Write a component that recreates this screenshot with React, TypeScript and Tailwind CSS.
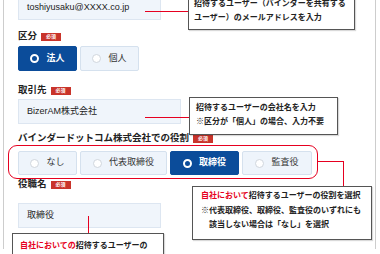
import React from "react";

const jp = "font-['Liberation_Sans','Noto_Sans_CJK_JP',sans-serif]";

const Badge = () => (
  <span className="ml-[4px] inline-flex h-[8px] w-[20px] items-center justify-center bg-[#c9342b] text-[5px] leading-none text-white">
    必須
  </span>
);

const Label = ({ text, className }: { text: string; className?: string }) => (
  <div className={`flex h-[13px] items-center text-[9.5px] font-bold text-[#222] ${className ?? ""}`}>
    {text}
    <Badge />
  </div>
);

const Option = ({ text, selected, width }: { text: string; selected?: boolean; width: string }) => (
  <div
    className={`flex h-full items-center justify-center gap-[7px] rounded-[2px] border text-[9px] ${width} ${
      selected ? "border-[#0b4c9a] bg-[#0b4c9a] font-bold text-white" : "border-[#d5e1ee] bg-[#eef4fb] text-[#333]"
    }`}
  >
    {selected ? (
      <span className="h-[9px] w-[9px] rounded-full border-[2.5px] border-white bg-[#0b4c9a]" />
    ) : (
      <span className="h-[9px] w-[9px] rounded-full border border-[#d0d6dd] bg-white" />
    )}
    {text}
  </div>
);

const Input = ({ value, width, className }: { value: string; width: string; className?: string }) => (
  <div
    className={`flex h-[25px] items-center border border-[#dde6f1] bg-[#f0f5fb] pl-[8px] text-[9px] text-[#222] ${width} ${className ?? ""}`}
  >
    {value}
  </div>
);

const Callout = ({ className, children }: { className: string; children: React.ReactNode }) => (
  <div className={`absolute border border-[#555] bg-white text-[8px] font-bold leading-[13.5px] text-[#222] shadow-[1px_1px_1px_rgba(0,0,0,0.15)] ${className}`}>
    {children}
  </div>
);

export default function App() {
  return (
    <div className={`relative h-[254px] w-[380px] overflow-hidden bg-white ${jp}`}>
      <div className="ml-[3px] h-full w-[373px] border-l border-r border-[#cdcdcd] pl-[14px]">
        <Input value="toshiyusaku@XXXX.co.jp" width="w-[143px]" className="-mt-[5px]" />

        <Label text="区分" className="mt-[10px]" />
        <div className="mt-[3px] flex h-[25px] gap-[3px]">
          <Option text="法人" selected width="w-[59px]" />
          <Option text="個人" width="w-[59px]" />
        </div>

        <Label text="取引先" className="mt-[13px]" />
        <Input value="BizerAM株式会社" width="w-[163px]" className="mt-[2px]" />

        <Label text="バインダードットコム株式会社での役割" className="mt-[8px]" />
        <div className="mt-[6px] flex h-[24px] gap-[3px]">
          <Option text="なし" width="w-[59px]" />
          <Option text="代表取締役" width="w-[87px]" />
          <Option text="取締役" selected width="w-[69px]" />
          <Option text="監査役" width="w-[70px]" />
        </div>

        <Label text="役職名" className="mt-[3px]" />
        <Input value="取締役" width="w-[143px]" className="mt-[12px]" />
      </div>

      {/* red highlight around role options */}
      <div className="absolute left-[8px] top-[145px] h-[34px] w-[310px] rounded-[9px] border-[1.5px] border-[#e60020]" />

      {/* connector lines */}
      <div className="absolute left-[145px] top-[10.5px] h-[1.5px] w-[44px] bg-[#e60020]" />
      <div className="absolute left-[145px] top-[116.5px] h-[1.5px] w-[44px] bg-[#e60020]" />
      <div className="absolute left-[318px] top-[160.5px] h-[1.5px] w-[26px] bg-[#e60020]" />
      <div className="absolute left-[342.5px] top-[160.5px] h-[26px] w-[1.5px] bg-[#e60020]" />
      <div className="absolute left-[87.5px] top-[216px] h-[17px] w-[1.5px] bg-[#e60020]" />

      <Callout className="left-[188px] -top-[5px] h-[35px] w-[167px] pl-[5px] pt-[1px]">
        <div>招待するユーザー（バインダーを共有する</div>
        <div>ユーザー）のメールアドレスを入力</div>
      </Callout>

      <Callout className="left-[189px] top-[97px] h-[38px] w-[149px] pl-[6px] pt-[3px]">
        <div>招待するユーザーの会社名を入力</div>
        <div>※区分が「個人」の場合、入力不要</div>
      </Callout>

      <Callout className="left-[192px] top-[186px] h-[54px] w-[180px] pl-[8px] pt-[2px] leading-[14.5px]">
        <div>
          <span className="text-[#e60020]">自社において</span>招待するユーザーの役割を選択
        </div>
        <div>※代表取締役、取締役、監査役のいずれにも</div>
        <div className="pl-[8px]">該当しない場合は「なし」を選択</div>
      </Callout>

      <Callout className="left-[12px] top-[233px] h-[40px] w-[152px] pl-[7px] pt-[5px]">
        <div>
          <span className="text-[#e60020]">自社においての</span>招待するユーザーの
        </div>
      </Callout>
    </div>
  );
}
